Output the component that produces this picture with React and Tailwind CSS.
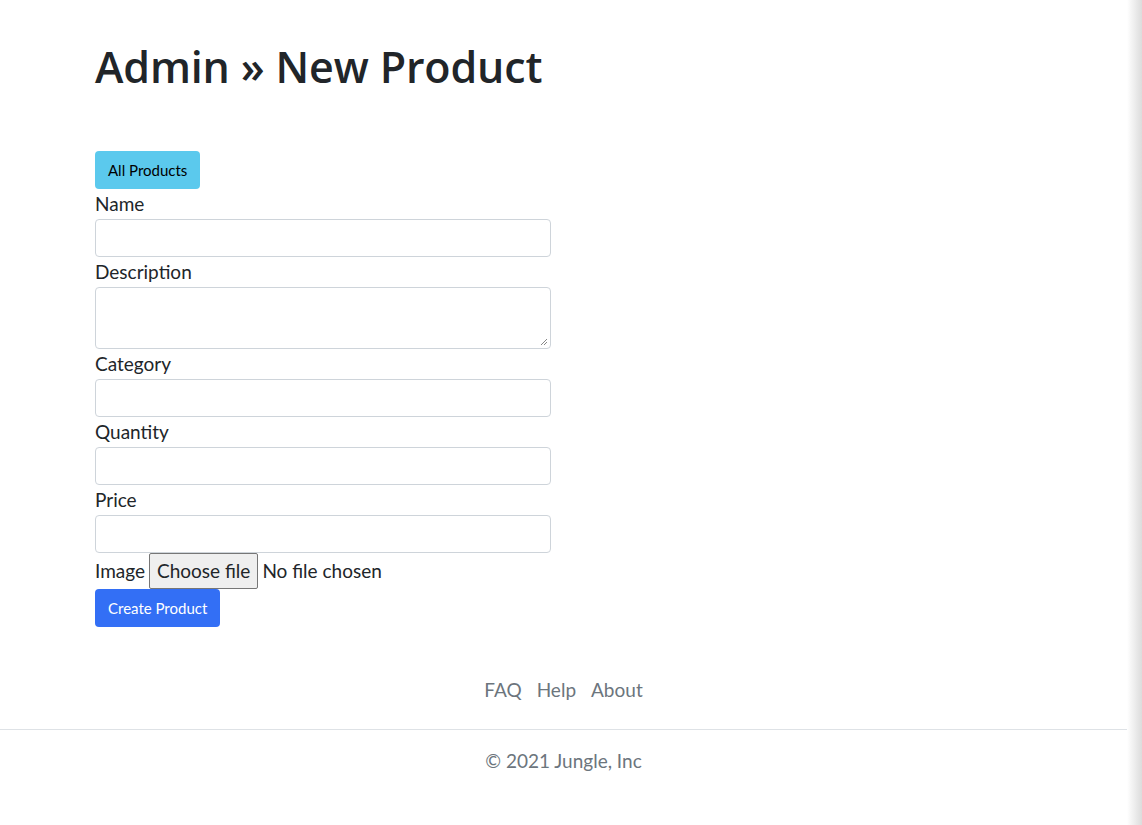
export default function App() {
  const body = { fontFamily: 'Lato, "Open Sans", sans-serif' };
  const labels = ["Category", "Quantity", "Price"];
  return (
    <div className="relative min-h-[825px] bg-white text-[#212529]" style={body}>
      <div className="w-[1127px]">
        <div className="ml-[83px] w-[960px] px-3">
          <h1
            className="pt-[40px] text-[43px] leading-[53px] font-semibold tracking-[-0.15px]"
            style={{ fontFamily: '"Open Sans", "DejaVu Sans", sans-serif' }}
          >
            Admin » New Product
          </h1>
          <div className="mt-[58px]">
            <button className="h-[38px] rounded-[4px] bg-[#5bc9ed] px-[13px] text-[15px] text-black">
              All Products
            </button>
          </div>
          <div className="w-[456px] text-[19px]">
            <div className="leading-[30px]">Name</div>
            <div className="h-[38px] rounded-[4px] border border-[#ced4da] bg-white" />
            <div className="leading-[30px]">Description</div>
            <div className="relative h-[62px] rounded-[4px] border border-[#ced4da] bg-white">
              <svg className="absolute bottom-[2px] right-[2px]" width="8" height="8" viewBox="0 0 8 8">
                <path d="M7 1 L1 7 M7 4 L4 7" stroke="#888" strokeWidth="1" />
              </svg>
            </div>
            {labels.map((l) => (
              <div key={l}>
                <div className="leading-[30px]">{l}</div>
                <div className="h-[38px] rounded-[4px] border border-[#ced4da] bg-white" />
              </div>
            ))}
            <div className="flex h-[36px] items-center">
              <span>Image</span>
              <span className="ml-[4px] flex h-[36px] items-center rounded-[2px] border border-[#767676] bg-[#efefef] px-[7px]">
                Choose file
              </span>
              <span className="ml-[4px]">No file chosen</span>
            </div>
            <button className="h-[38px] rounded-[4px] bg-[#336ff5] px-[13px] text-[15px] text-white">
              Create Product
            </button>
          </div>
        </div>
        <footer className="mt-[48px] text-[19px] text-[#6c757d]">
          <div className="flex justify-center gap-[15px] pb-[24px] leading-[30px]">
            <span>FAQ</span>
            <span>Help</span>
            <span>About</span>
          </div>
          <div className="border-t border-[#dee2e6] pt-[16px] text-center leading-[30px]">
            © 2021 Jungle, Inc
          </div>
        </footer>
      </div>
      <div className="pointer-events-none absolute right-0 top-0 h-full w-[15px] bg-gradient-to-r from-white/0 to-[#dcdcdc]" />
    </div>
  );
}
